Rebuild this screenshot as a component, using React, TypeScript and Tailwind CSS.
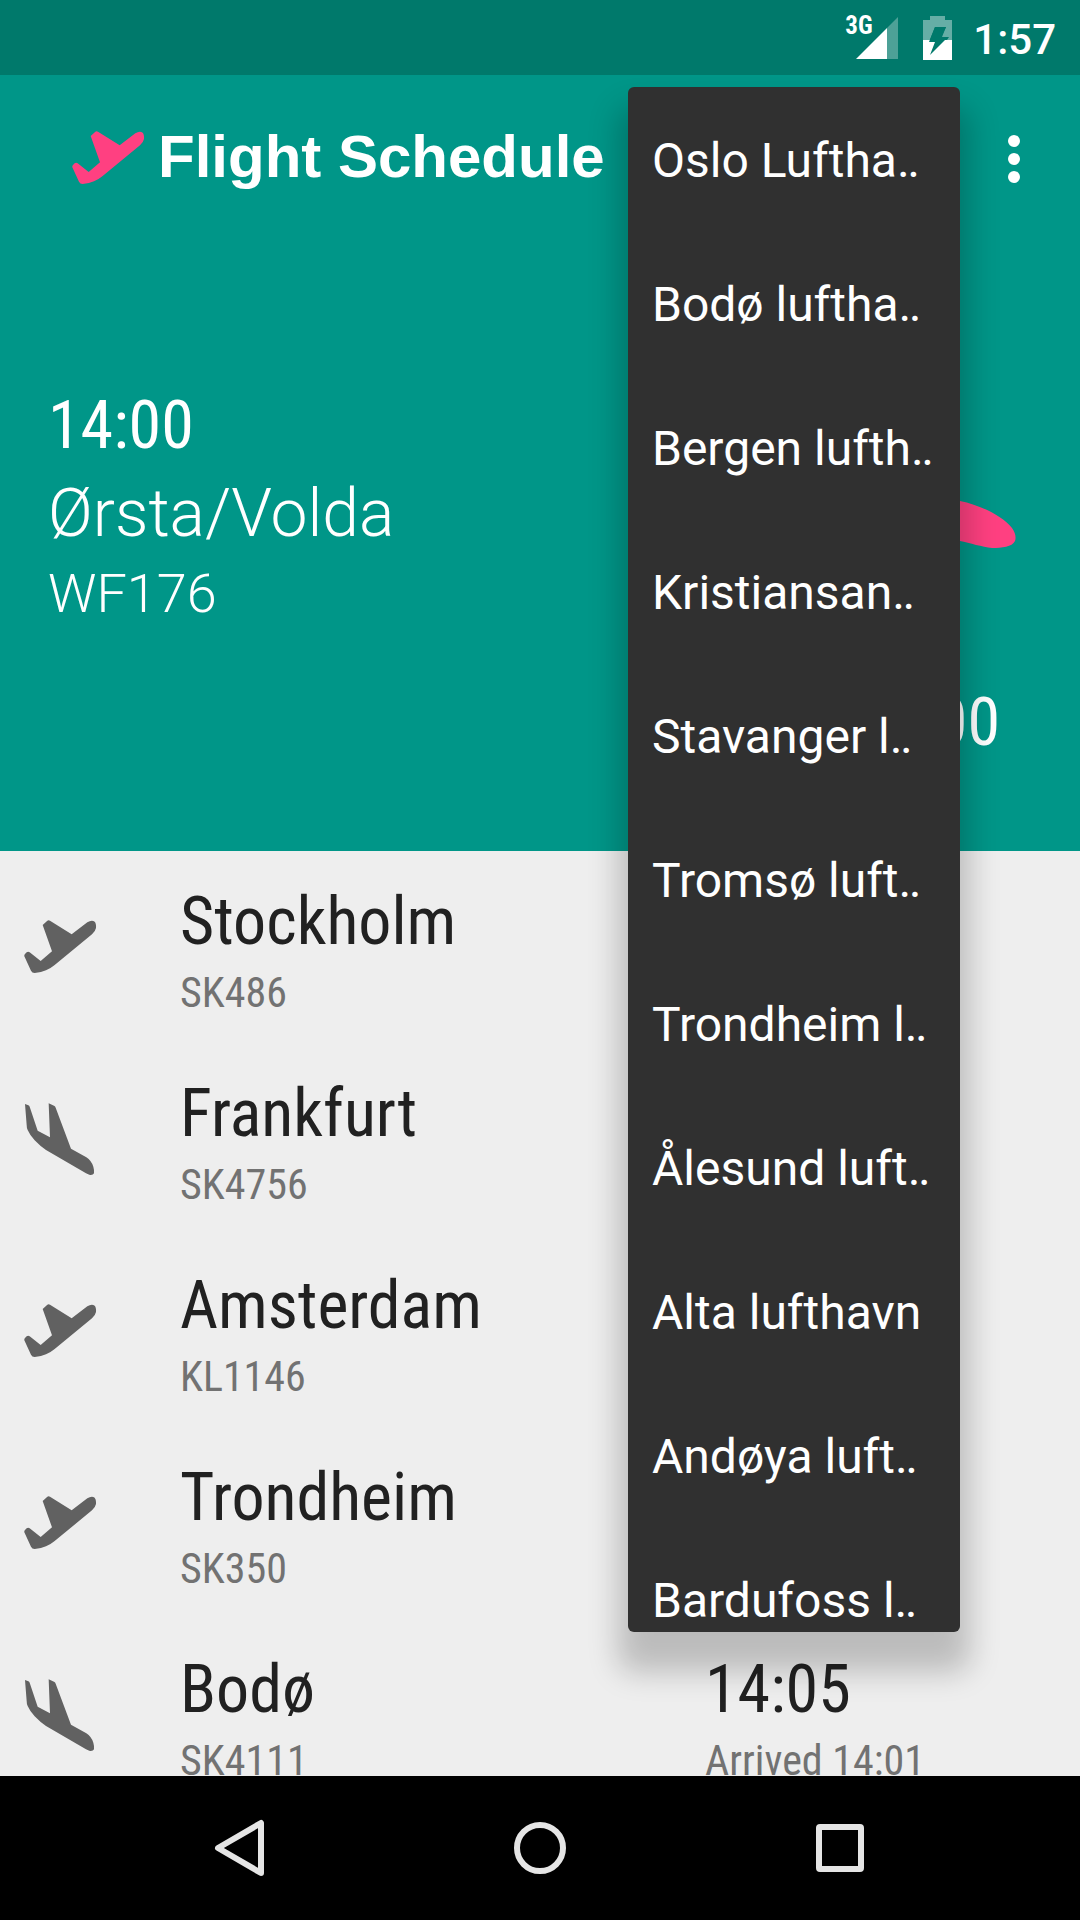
import React from "react";

const airports = [
  "Oslo Luftha‥",
  "Bodø luftha‥",
  "Bergen lufth‥",
  "Kristiansan‥",
  "Stavanger l‥",
  "Tromsø luft‥",
  "Trondheim l‥",
  "Ålesund luft‥",
  "Alta lufthavn",
  "Andøya luft‥",
  "Bardufoss l‥",
];

type Flight = {
  city: string;
  code: string;
  kind: "departure" | "arrival";
  time?: string;
  status?: string;
};

const flights: Flight[] = [
  { city: "Stockholm", code: "SK486", kind: "departure" },
  { city: "Frankfurt", code: "SK4756", kind: "arrival" },
  { city: "Amsterdam", code: "KL1146", kind: "departure" },
  { city: "Trondheim", code: "SK350", kind: "departure" },
  { city: "Bodø", code: "SK4111", kind: "arrival", time: "14:05", status: "Arrived 14:01" },
];

function TakeOff({ className }: { className: string }) {
  return (
    <svg viewBox="60 90 240 240" className={className} fill="currentColor" aria-hidden="true">
      <path d="M128 135 L142 122 Q146 119 150 122 L215 163 L262 127 Q275 119 284 125 Q289 130 288 144 Q286 154 276 163 L164 255 Q152 265 138 271 Q120 279 104 279 Q96 279 93 272 L73 229 Q72 225 75 222 L80 217 Q85 213 89 217 L122 243 L156 214 Z" />
    </svg>
  );
}

function Landing({ className }: { className: string }) {
  return (
    <svg viewBox="60 666 240 240" className={className} fill="currentColor" aria-hidden="true">
      <path d="M75 672 L85 676 Q88 677 89 680 L113 752 L150 772 L146 670 L162 677 Q166 679 167 683 L213 806 L259 832 Q274 842 280 860 Q283 870 282 880 Q279 886 270 885 Q265 884 258 880 L138 810 Q122 800 104 781 Q90 766 83 750 Q80 744 80 735 Z" />
    </svg>
  );
}

function StatusBar() {
  return (
    <div className="flex h-[75px] shrink-0 items-center justify-end bg-[#00796b] pr-6 text-white">
      <div className="relative mr-[25px] h-[42px] w-[54px]">
        <span className="absolute top-0 left-px font-['Roboto_Condensed',Roboto,sans-serif] text-[25px] leading-[18px] font-bold">
          3G
        </span>
        <svg viewBox="0 0 54 42" className="h-full w-full" aria-hidden="true">
          <path d="M54 0V42H43V11Z" fill="#fff" opacity="0.3" />
          <path d="M43 11V42H12Z" fill="#fff" />
        </svg>
      </div>
      <svg viewBox="0 0 29 44" className="mr-[21px] h-[44px] w-[29px]" aria-hidden="true">
        <path d="M7 0H22V4H29V24H24L26 21H19L23 11H12L6 26H12L7 24H0V4H7Z" fill="#fff" opacity="0.4" />
        <path d="M0 24H29V44H0Z" fill="#fff" />
        <path d="M12 11H23L18 21H25L7 39L12 26H6Z" fill="#00796b" />
      </svg>
      <span className="pt-1 text-[42px] leading-[50px] font-medium">1:57</span>
    </div>
  );
}

export default function App() {
  return (
    <div className="relative flex h-screen flex-col overflow-hidden bg-[#eeeeee] font-[Roboto,sans-serif]">
      <StatusBar />

      <header className="shrink-0 bg-[#009688] text-white">
        <div className="flex h-[168px] items-center pr-11 pl-[68px]">
          <TakeOff className="mt-1 h-20 w-20 text-[#ff4081]" />
          <h1 className="ml-[10px] pb-1 font-['Liberation_Sans',Arial,sans-serif] text-[60px] leading-[72px] font-bold">
            Flight Schedule
          </h1>
          <button aria-label="More options" className="ml-auto flex w-11 flex-col items-center gap-[6px]">
            <span className="h-3 w-3 rounded-full bg-white" />
            <span className="h-3 w-3 rounded-full bg-white" />
            <span className="h-3 w-3 rounded-full bg-white" />
          </button>
        </div>

        <div className="flex justify-between pt-[144px] pb-[90px] pl-12">
          <div className="flex flex-col gap-[11px]">
            <p className="font-['Roboto_Condensed',Roboto,sans-serif] text-[66px] leading-[77px]">14:00</p>
            <p className="text-[66px] leading-[77px] font-light">Ørsta/Volda</p>
            <p className="text-[54px] leading-[62px] font-light">WF176</p>
          </div>
          <div className="flex flex-col items-end gap-[124px] pt-[73px]">
            <svg viewBox="716 460 300 100" className="mr-16 h-[100px] w-[300px]" aria-hidden="true">
              <path
                d="M760 460L800 470L960 501C980 505 1003 516 1012 528C1016 534 1016 538 1015 541C1012 547 1002 548 992 548C982 547 970 543 960 541L790 500Z"
                fill="#ff4081"
              />
            </svg>
            <p className="mr-20 font-['Roboto_Condensed',Roboto,sans-serif] text-[66px] leading-[77px]">14:00</p>
          </div>
        </div>
      </header>

      <main className="min-h-0 flex-1 overflow-hidden font-['Roboto_Condensed',Roboto,sans-serif]">
        <ul>
          {flights.map((f) => (
            <li key={f.code} className="flex h-48 pl-5">
              {f.kind === "departure" ? (
                <TakeOff className="mt-[59px] h-20 w-20 text-[#616161]" />
              ) : (
                <Landing className="mt-[59px] h-20 w-20 text-[#616161]" />
              )}
              <div className="ml-20 flex w-[525px] flex-col gap-2 pt-8">
                <p className="text-[66px] leading-[77px] text-[#212121]">{f.city}</p>
                <p className="text-[42px] leading-[49px] text-[#727272]">{f.code}</p>
              </div>
              {f.time && (
                <div className="flex flex-col gap-2 pt-8">
                  <p className="text-[66px] leading-[77px] text-[#212121]">{f.time}</p>
                  <p className="text-[42px] leading-[49px] text-[#727272]">{f.status}</p>
                </div>
              )}
            </li>
          ))}
        </ul>
      </main>

      <nav className="z-10 grid h-36 shrink-0 grid-cols-3 bg-black px-[90px] text-[#e5e5e5]">
        <button aria-label="Back" className="flex items-center justify-center">
          <svg viewBox="0 0 60 60" className="h-[60px] w-[60px]" fill="none" stroke="currentColor" strokeWidth="6" strokeLinejoin="round" aria-hidden="true">
            <path d="M51 5V55L8 30Z" />
          </svg>
        </button>
        <button aria-label="Home" className="flex items-center justify-center">
          <span className="h-[52px] w-[52px] rounded-full border-6 border-[#e5e5e5]" />
        </button>
        <button aria-label="Recent apps" className="flex items-center justify-center">
          <span className="h-12 w-12 rounded-[4px] border-6 border-[#e5e5e5]" />
        </button>
      </nav>

      <ul
        aria-label="Airport"
        className="absolute top-[87px] right-[120px] bottom-[288px] w-[332px] overflow-hidden rounded-[6px] bg-[#303030] text-white shadow-[0_30px_30px_10px_rgba(0,0,0,0.21)]"
      >
        {airports.map((name) => (
          <li key={name}>
            <button className="flex h-36 w-full items-center px-6 pt-1 text-left text-[48px] leading-[56px] whitespace-nowrap">
              {name}
            </button>
          </li>
        ))}
      </ul>
    </div>
  );
}
